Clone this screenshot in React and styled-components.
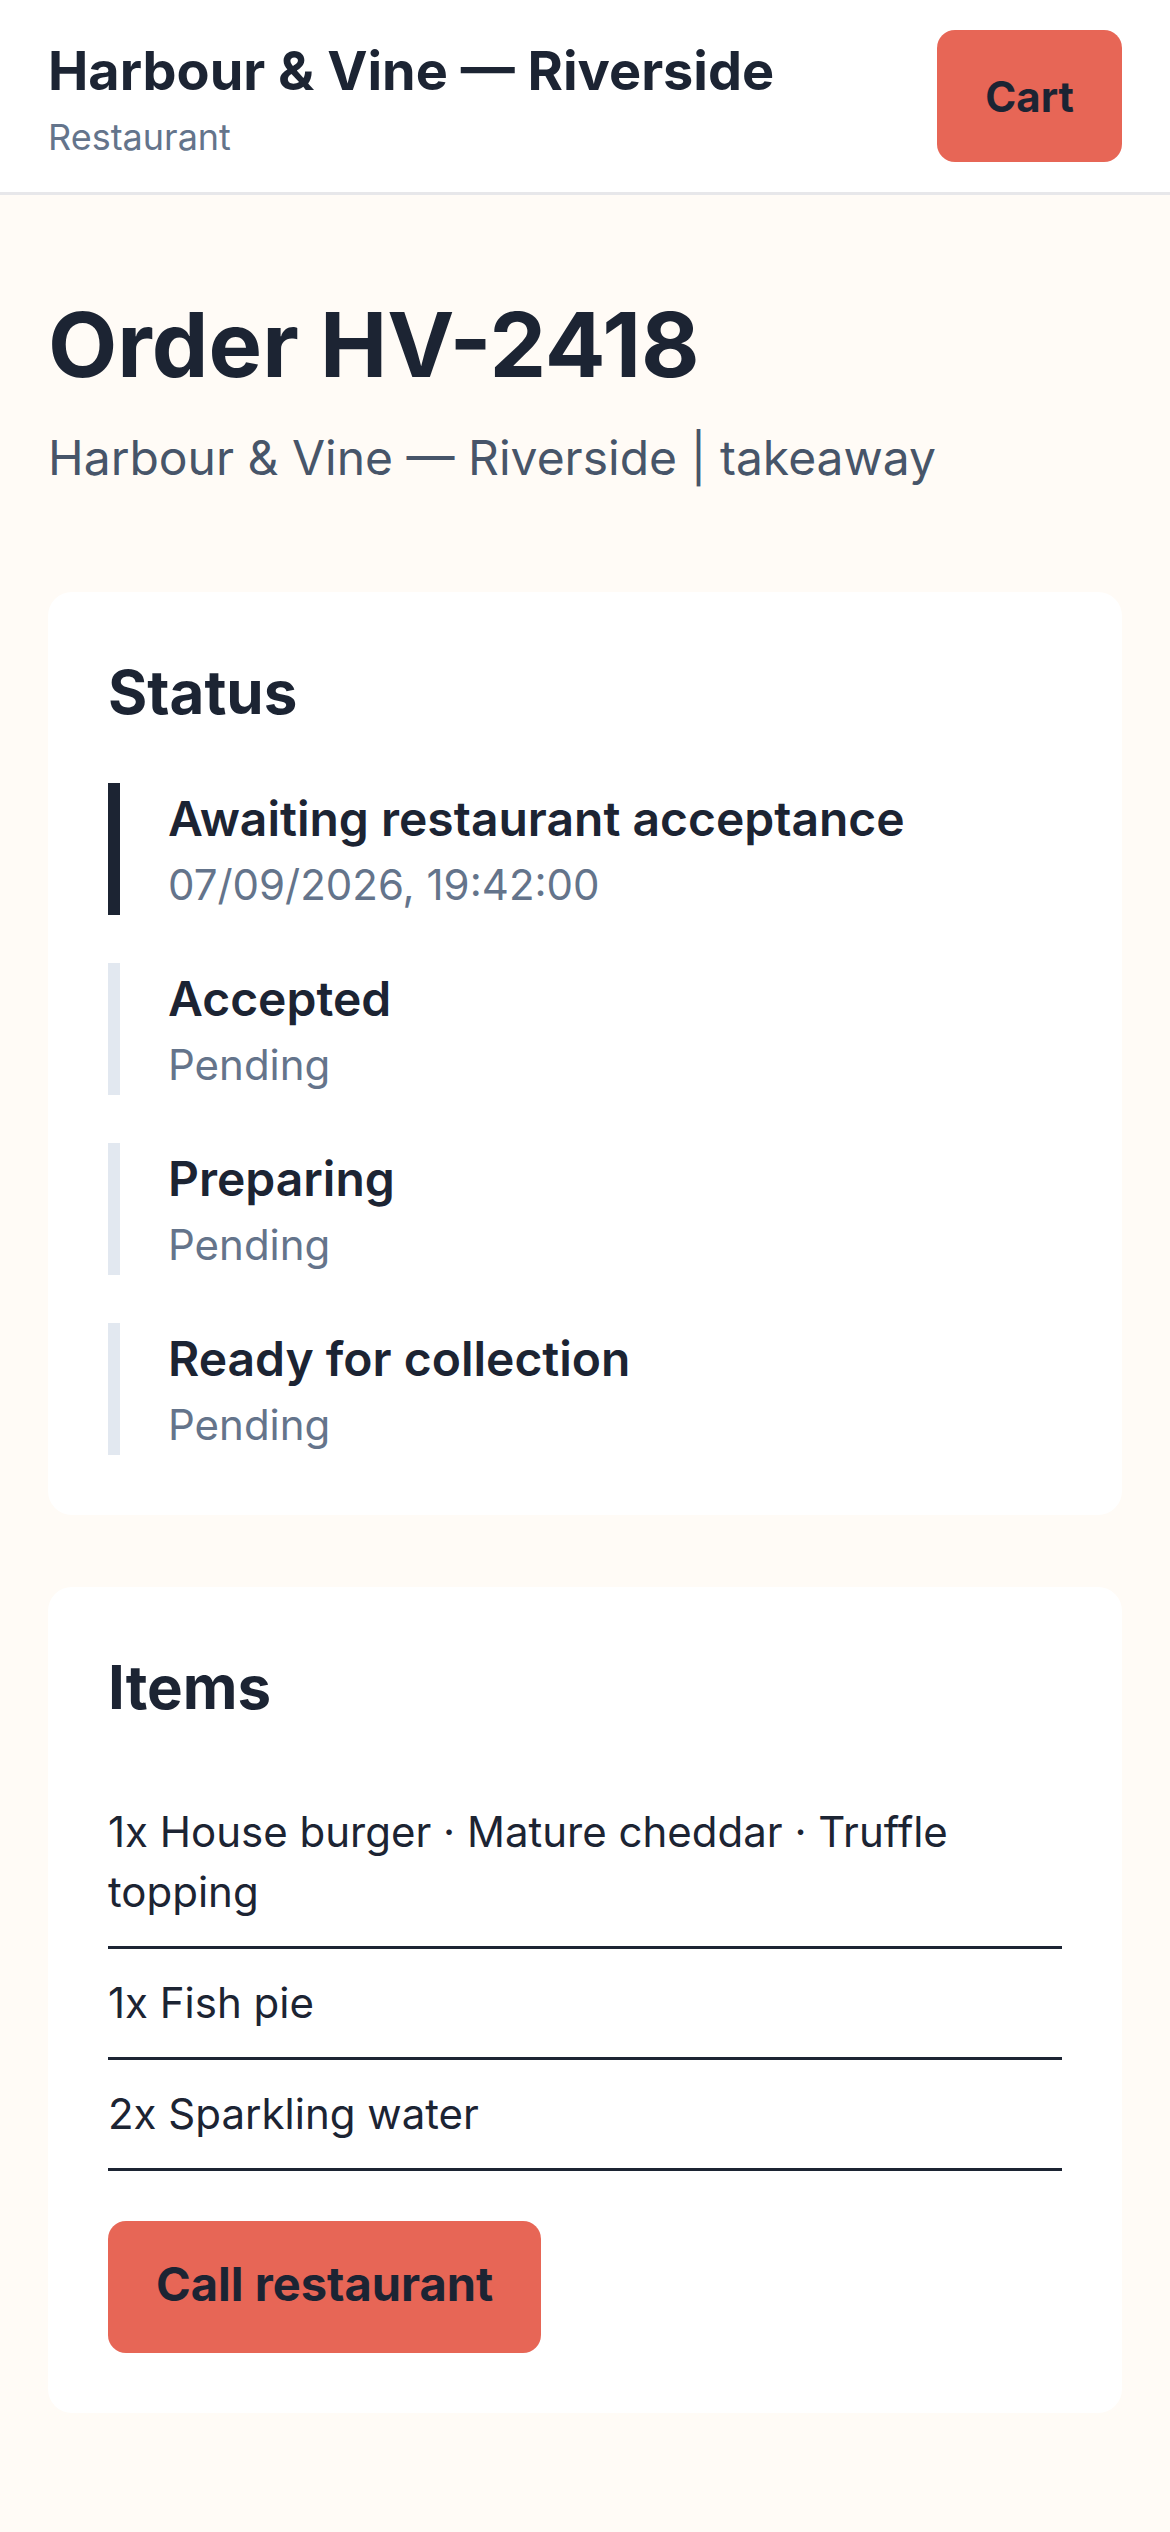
import React from "react";
import styled, { createGlobalStyle } from "styled-components";

const Global = createGlobalStyle`
  html, body { margin: 0; padding: 0; }
  body {
    background: #fffbf6;
    font-family: Inter, "Noto Sans", "Liberation Sans", sans-serif;
    color: #1c2433;
  }
  * { box-sizing: border-box; }
`;

const Page = styled.div`
  min-height: 100vh;
  background: #fffbf6;
`;

const Header = styled.header`
  display: flex;
  align-items: center;
  justify-content: space-between;
  padding: 30px 48px;
  background: #ffffff;
  border-bottom: 3px solid #e7e7ea;
`;

const Brand = styled.div`
  display: flex;
  flex-direction: column;
`;

const BrandName = styled.div`
  font-size: 54px;
  line-height: 82px;
  font-weight: 700;
  color: #1c2433;
`;

const BrandKind = styled.div`
  font-size: 36px;
  line-height: 50px;
  color: #64748b;
`;

const Button = styled.button`
  font-family: inherit;
  border: none;
  background: #e76656;
  color: #1c2433;
  font-weight: 700;
  font-size: ${(p) => (p.$large ? "47px" : "42px")};
  height: 132px;
  padding: 0 48px ${(p) => (p.$large ? "8px" : "0")};
  border-radius: 18px;
  cursor: pointer;
`;

const Main = styled.main`
  padding: 96px 48px 120px;
  display: flex;
  flex-direction: column;
`;

const Title = styled.h1`
  margin: 0;
  font-size: 90px;
  line-height: 108px;
  font-weight: 700;
  color: #1c2433;
`;

const Subtitle = styled.p`
  margin: 21px 0 0;
  font-size: 48px;
  line-height: 76px;
  color: #475569;
`;

const Card = styled.section`
  background: #ffffff;
  border-radius: 24px;
  padding: 60px;
  margin-top: ${(p) => p.$top}px;
  display: flex;
  flex-direction: column;
`;

const CardTitle = styled.h2`
  margin: 0 0 51px;
  font-size: 60px;
  line-height: 80px;
  font-weight: 700;
  color: #1c2433;
`;

const Timeline = styled.ol`
  list-style: none;
  margin: 0;
  padding: 0;
  display: flex;
  flex-direction: column;
  gap: 48px;
`;

const Step = styled.li`
  border-left: 12px solid ${(p) => (p.$active ? "#1c2433" : "#e2e8f0")};
  padding-left: 48px;
  display: flex;
  flex-direction: column;
`;

const StepName = styled.div`
  font-size: 48px;
  line-height: 72px;
  font-weight: 600;
  color: #1c2433;
`;

const StepTime = styled.div`
  font-size: 42px;
  line-height: 60px;
  color: #64748b;
`;

const ItemList = styled.ul`
  list-style: none;
  margin: 0;
  padding: 0;
`;

const ItemRow = styled.li`
  padding: 24px 0;
  font-size: 42px;
  line-height: 60px;
  color: #1c2433;
  border-bottom: 3px solid #1c2433;
`;

const Actions = styled.div`
  margin-top: 50px;
  display: flex;
`;

const steps = [
  { name: "Awaiting restaurant acceptance", time: "07/09/2026, 19:42:00", active: true },
  { name: "Accepted", time: "Pending" },
  { name: "Preparing", time: "Pending" },
  { name: "Ready for collection", time: "Pending" },
];

const items = [
  "1x House burger · Mature cheddar · Truffle topping",
  "1x Fish pie",
  "2x Sparkling water",
];

export default function App() {
  return (
    <Page>
      <Global />
      <Header>
        <Brand>
          <BrandName>Harbour &amp; Vine — Riverside</BrandName>
          <BrandKind>Restaurant</BrandKind>
        </Brand>
        <Button>Cart</Button>
      </Header>
      <Main>
        <Title>Order HV-2418</Title>
        <Subtitle>Harbour &amp; Vine — Riverside | takeaway</Subtitle>
        <Card $top={96}>
          <CardTitle>Status</CardTitle>
          <Timeline>
            {steps.map((s) => (
              <Step key={s.name} $active={s.active}>
                <StepName>{s.name}</StepName>
                <StepTime>{s.time}</StepTime>
              </Step>
            ))}
          </Timeline>
        </Card>
        <Card $top={72}>
          <CardTitle>Items</CardTitle>
          <ItemList>
            {items.map((it) => (
              <ItemRow key={it}>{it}</ItemRow>
            ))}
          </ItemList>
          <Actions>
            <Button $large>Call restaurant</Button>
          </Actions>
        </Card>
      </Main>
    </Page>
  );
}
